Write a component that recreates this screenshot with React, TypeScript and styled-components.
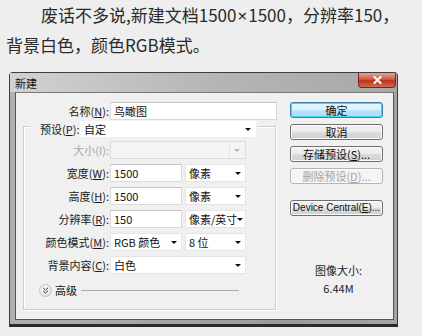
import React from "react"
import styled, { createGlobalStyle } from "styled-components"

const GlobalStyle = createGlobalStyle`
  html, body {
    margin: 0;
    padding: 0;
    background: #eeeeee;
  }
  body {
    font-family: "Noto Sans CJK SC", "Noto Sans", sans-serif;
  }
`

const Page = styled.div`
  width: 422px;
  height: 336px;
  overflow: hidden;
`

const Intro = styled.p`
  margin: 0;
  padding: 0 6px;
  font-size: 17px;
  line-height: 29px;
  text-indent: 35px;
  color: #2a2a2a;
  white-space: nowrap;
`

const Times = styled.span`
  font-family: "Noto Sans", sans-serif;
  margin: 0 1px;
`

const Window = styled.div`
  margin: 13px 0 0 9px;
  width: 389px;
  height: 255px;
  box-sizing: border-box;
  border: 1px solid #3d3d3d;
  border-bottom: 3px solid #2b2b2b;
  border-radius: 4px 4px 0 0;
  background: linear-gradient(to right, #b0b0b0, #9c9c9c 70%, #a4a4a4);
  display: flex;
  flex-direction: column;
  font-size: 11px;
  color: #111;
`

const TitleBar = styled.div`
  height: 19px;
  display: flex;
  align-items: flex-start;
  justify-content: space-between;
  background: linear-gradient(to right, #d2d2d2, #b4b4b4 55%, #a8a8a8);
`

const Title = styled.span`
  margin: 3px 0 0 5px;
  line-height: 14px;
  color: #161616;
`

const CloseButton = styled.div`
  width: 38px;
  height: 15px;
  margin-right: 1px;
  box-sizing: border-box;
  border: 1px solid #6e2a1f;
  border-top: none;
  border-radius: 0 0 4px 4px;
  background: linear-gradient(#e7a496, #d25a43 45%, #b9321b 55%, #cf6b55);
  display: flex;
  align-items: center;
  justify-content: center;
`

const Client = styled.div`
  flex: 1;
  margin: 0 3px 4px 5px;
  box-sizing: border-box;
  border: 1px solid #555555;
  border-top-color: #7a7a7a;
  background: #f0f0f0;
  display: flex;
  padding-top: 9px;
`

const LeftPane = styled.div`
  width: 261px;
  padding-left: 7px;
  box-sizing: border-box;
`

const Row = styled.div`
  display: flex;
  align-items: center;
  height: 18px;
`

const Label = styled.span<{ $width?: number; $disabled?: boolean }>`
  width: ${(p) => p.$width ?? 85}px;
  margin-right: 1px;
  text-align: right;
  white-space: nowrap;
  color: ${(p) => (p.$disabled ? "#a8a8a8" : "#1a1a1a")};
`

const TextInput = styled.div<{ $width: number }>`
  width: ${(p) => p.$width}px;
  height: 18px;
  box-sizing: border-box;
  background: #fff;
  border: 1px solid #dadada;
  border-top-color: #c4c4c4;
  padding-left: 3px;
  line-height: 16px;
  white-space: nowrap;
`

const Select = styled.div<{ $width: number; $disabled?: boolean; $flat?: boolean }>`
  width: ${(p) => p.$width}px;
  height: ${(p) => (p.$flat ? 16 : 18)}px;
  box-sizing: border-box;
  background: ${(p) => (p.$disabled ? "#f4f4f4" : "#fff")};
  border: 1px solid ${(p) => (p.$flat ? "transparent" : p.$disabled ? "#dcdcdc" : "#e4e4e4")};
  padding-left: 3px;
  display: flex;
  align-items: center;
  justify-content: space-between;
  white-space: nowrap;
`

const Arrow = styled.span<{ $disabled?: boolean }>`
  width: 0;
  height: 0;
  margin-right: ${(p) => (p.$disabled ? 0 : 4)}px;
  border-left: 3px solid transparent;
  border-right: 3px solid transparent;
  border-top: 3px solid ${(p) => (p.$disabled ? "#b5b5b5" : "#111")};
`

const DisabledArrowBox = styled.span`
  width: 14px;
  height: 14px;
  margin-right: 1px;
  border-left: 1px solid #e3e3e3;
  display: flex;
  align-items: center;
  justify-content: center;
`

const GroupBox = styled.div`
  margin-top: 6px;
  width: 253px;
  height: 184px;
  box-sizing: border-box;
  border: 1px solid #cdcdcd;
  box-shadow: inset 1px 1px 0 #fff, 1px 1px 0 #fff;
  display: flex;
  flex-direction: column;
`

const PresetRow = styled(Row)`
  margin: -6px 0 0 6px;
  width: 228px;
  height: 16px;
  background: #f0f0f0;
  padding-left: 10px;
  box-sizing: border-box;
  gap: 2px;
`

const PresetLabel = styled.span`
  white-space: nowrap;
  width: 38px;
  color: #1a1a1a;
`

const Fields = styled.div`
  margin-top: 4px;
  display: flex;
  flex-direction: column;
  gap: 5px;
`

const Pair = styled.div`
  display: flex;
  gap: 3px;
`

const AdvancedRow = styled.div`
  margin: 8px 36px 0 15px;
  height: 16px;
  display: flex;
  align-items: center;
`

const ChevronCircle = styled.span`
  width: 11px;
  height: 11px;
  border-radius: 50%;
  background: radial-gradient(circle at 40% 35%, #ffffff, #d8d8d8);
  border: 1px solid #c2c2c2;
  display: flex;
  align-items: center;
  justify-content: center;
  margin-right: 3px;
`

const Rule = styled.span`
  flex: 1;
  margin-left: 4px;
  height: 0;
  border-top: 1px solid #a9a9a9;
`

const RightPane = styled.div`
  margin-left: 13px;
  width: 93px;
  display: flex;
  flex-direction: column;
  gap: 6px;
`

const Button = styled.div<{ $primary?: boolean; $disabled?: boolean; $spaced?: boolean; $latin?: boolean }>`
  height: 16px;
  box-sizing: border-box;
  margin-top: ${(p) => (p.$spaced ? 10 : 0)}px;
  border: 1px solid ${(p) => (p.$primary ? "#3c7fb1" : p.$disabled ? "#b4b4b4" : "#707070")};
  border-radius: 3px;
  background: ${(p) =>
    p.$disabled
      ? "#f4f4f4"
      : p.$primary
        ? "linear-gradient(#eaf6fd, #d9f0fc 50%, #bee6fd 50%, #a7d9f5)"
        : "linear-gradient(#f2f2f2, #ebebeb 50%, #dddddd 50%, #cfcfcf)"};
  box-shadow: inset 0 0 0 1px ${(p) => (p.$primary ? "#48d5f4" : "#fcfcfc")};
  color: ${(p) => (p.$disabled ? "#a5a5a5" : "#111")};
  font-family: ${(p) => (p.$latin ? '"Liberation Sans", sans-serif' : "inherit")};
  font-size: ${(p) => (p.$latin ? 10 : 11)}px;
  display: flex;
  align-items: center;
  justify-content: center;
  line-height: 14px;
  white-space: nowrap;
`

const SizeInfo = styled.div`
  margin-top: 39px;
  padding-left: 4px;
  text-align: center;
  line-height: 18px;
  color: #222;
`

function DropSelect({ width, children }: { width: number; children?: React.ReactNode }) {
  return (
    <Select $width={width}>
      <span>{children}</span>
      <Arrow />
    </Select>
  )
}

export default function App() {
  return (
    <Page>
      <GlobalStyle />
      <Intro>
        废话不多说,新建文档1500<Times>×</Times>1500，分辨率150，
        <br />
        背景白色，颜色RGB模式。
      </Intro>

      <Window>
        <TitleBar>
          <Title>新建</Title>
          <CloseButton>
            <svg width="9" height="8" viewBox="0 0 9 8">
              <path d="M1.5 1 L7.5 7 M7.5 1 L1.5 7" stroke="#fff" strokeWidth="2" strokeLinecap="square" />
            </svg>
          </CloseButton>
        </TitleBar>

        <Client>
          <LeftPane>
            <Row>
              <Label $width={86}>名称(<u>N</u>):</Label>
              <TextInput $width={167}>鸟瞰图</TextInput>
            </Row>

            <GroupBox>
              <PresetRow>
                <PresetLabel>预设(<u>P</u>):</PresetLabel>
                <Select $width={176} $flat>
                  <span>自定</span>
                  <Arrow />
                </Select>
              </PresetRow>

              <Fields>
                <Row>
                  <Label $disabled>大小(I):</Label>
                  <Select $width={136} $disabled>
                    <span />
                    <DisabledArrowBox>
                      <Arrow $disabled />
                    </DisabledArrowBox>
                  </Select>
                </Row>
                <Row>
                  <Label>宽度(<u>W</u>):</Label>
                  <Pair>
                    <TextInput $width={72}>1500</TextInput>
                    <DropSelect width={61}>像素</DropSelect>
                  </Pair>
                </Row>
                <Row>
                  <Label>高度(<u>H</u>):</Label>
                  <Pair>
                    <TextInput $width={72}>1500</TextInput>
                    <DropSelect width={61}>像素</DropSelect>
                  </Pair>
                </Row>
                <Row>
                  <Label>分辨率(<u>R</u>):</Label>
                  <Pair>
                    <TextInput $width={72}>150</TextInput>
                    <DropSelect width={61}>像素/英寸</DropSelect>
                  </Pair>
                </Row>
                <Row>
                  <Label>颜色模式(<u>M</u>):</Label>
                  <Pair>
                    <DropSelect width={72}>RGB 颜色</DropSelect>
                    <DropSelect width={61}>8 位</DropSelect>
                  </Pair>
                </Row>
                <Row>
                  <Label>背景内容(<u>C</u>):</Label>
                  <DropSelect width={136}>白色</DropSelect>
                </Row>
              </Fields>

              <AdvancedRow>
                <ChevronCircle>
                  <svg width="7" height="7" viewBox="0 0 7 7">
                    <path d="M1 0.8 L3.5 3 L6 0.8 M1 3.8 L3.5 6 L6 3.8" fill="none" stroke="#333" strokeWidth="1" />
                  </svg>
                </ChevronCircle>
                <span>高级</span>
                <Rule />
              </AdvancedRow>
            </GroupBox>
          </LeftPane>

          <RightPane>
            <Button $primary>确定</Button>
            <Button>取消</Button>
            <Button>存储预设(<u>S</u>)...</Button>
            <Button $disabled>删除预设(<u>D</u>)...</Button>
            <Button $spaced $latin>Device Central(<u>E</u>)...</Button>
            <SizeInfo>
              图像大小:
              <br />
              6.44M
            </SizeInfo>
          </RightPane>
        </Client>
      </Window>
    </Page>
  )
}
